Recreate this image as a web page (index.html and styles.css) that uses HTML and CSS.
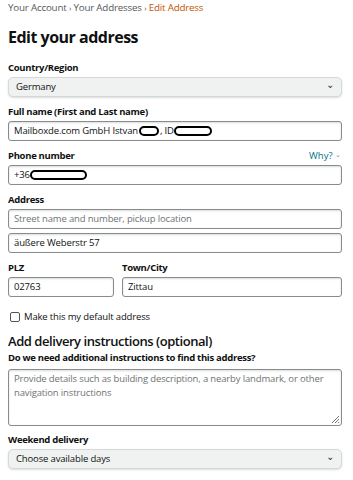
FILE: index.html
```html
<!DOCTYPE html>
<html lang="en">
<head>
  <meta charset="UTF-8">
  <meta name="viewport" content="width=device-width, initial-scale=1.0">
  <title>Edit your address</title>
  <link rel="stylesheet" href="styles.css">
</head>
<body>

<div class="container">
  <div class="breadcrumb">
    <a href="#">Your Account</a> <span class="sep">›</span>
    <a href="#">Your Addresses</a> <span class="sep">›</span>
    <span class="current">Edit Address</span>
  </div>

  <h1>Edit your address</h1>

  <div class="field">
    <label>Country/Region</label>
    <div class="dropdown">Germany <span class="chev">&#8964;</span></div>
  </div>

  <div class="field">
    <label>Full name (First and Last name)</label>
    <div class="input">Mailboxde.com GmbH Istvan <span class="redact short"></span>, ID <span class="redact mid"></span></div>
  </div>

  <div class="field">
    <div class="label-row">
      <label>Phone number</label>
      <a href="#" class="why">Why? <span class="small-chev">&#8964;</span></a>
    </div>
    <div class="input">+36<span class="redact long"></span></div>
  </div>

  <div class="field">
    <label>Address</label>
    <div class="input placeholder">Street name and number, pickup location</div>
    <div class="input second">äußere Weberstr 57</div>
  </div>

  <div class="field row">
    <div class="col plz">
      <label>PLZ</label>
      <div class="input">02763</div>
    </div>
    <div class="col city">
      <label>Town/City</label>
      <div class="input">Zittau</div>
    </div>
  </div>

  <div class="check">
    <span class="box"></span> Make this my default address
  </div>

  <h2>Add delivery instructions (optional)</h2>

  <div class="field tight">
    <label>Do we need additional instructions to find this address?</label>
    <div class="textarea placeholder">Provide details such as building description, a nearby landmark, or other navigation instructions
      <svg class="grip" width="9" height="9" viewBox="0 0 9 9"><path d="M8 1L1 8M8 4L4 8M8 7L7 8" stroke="#777" stroke-width="1"/></svg>
    </div>
  </div>

  <div class="field">
    <label>Weekend delivery</label>
    <div class="dropdown">Choose available days <span class="chev">&#8964;</span></div>
  </div>
</div>

</body>
</html>
```

FILE: styles.css
```css
body {
  font-family: "Open Sans", "Noto Sans", Arial, sans-serif;
  margin: 0;
  padding: 0;
  background-color: #fff;
  color: #0f1111;
}

.container {
  width: 334px;
  margin-left: 8px;
  padding-top: 1px;
}

.breadcrumb {
  font-size: 9.8px;
  letter-spacing: -0.2px;
  color: #565959;
  line-height: 14px;
}

.breadcrumb a {
  color: #565959;
  text-decoration: none;
}

.breadcrumb .sep {
  font-size: 8px;
}

.breadcrumb .current {
  color: #c45500;
}

h1 {
  font-size: 16px;
  font-weight: 700;
  letter-spacing: -0.5px;
  margin: 11px 0 13px;
  line-height: 22px;
}

h2 {
  font-size: 13px;
  font-weight: 600;
  letter-spacing: -0.45px;
  margin: 8px 0 1px;
  line-height: 18px;
}

.field {
  margin-bottom: 8px;
}

.field label {
  display: block;
  font-size: 9.5px;
  font-weight: 700;
  letter-spacing: -0.3px;
  line-height: 14px;
  margin-bottom: 2px;
}

.label-row {
  display: flex;
  justify-content: space-between;
  align-items: flex-start;
}

.why {
  font-size: 9.5px;
  color: #007185;
  text-decoration: none;
  line-height: 14px;
  margin-right: 1px;
}

.small-chev {
  font-size: 7px;
  color: #888;
  position: relative;
  top: -2px;
}

.input {
  height: 20px;
  box-sizing: border-box;
  border: 1px solid #888c8c;
  border-radius: 3px;
  box-shadow: inset 0 1px 2px rgba(15, 17, 17, 0.15);
  font-size: 9.5px;
  letter-spacing: -0.15px;
  line-height: 18px;
  padding: 0 5px;
  display: flex;
  align-items: center;
  white-space: nowrap;
}

.input.second {
  margin-top: 4px;
}

.placeholder {
  color: #6f7373;
}

.dropdown {
  height: 20px;
  box-sizing: border-box;
  background-color: #f0f2f2;
  border: 1px solid #d5d9d9;
  border-radius: 5px;
  box-shadow: 0 1px 2px rgba(15, 17, 17, 0.15);
  font-size: 9.5px;
  letter-spacing: -0.15px;
  line-height: 18px;
  padding: 0 7px;
  display: flex;
  justify-content: space-between;
  align-items: center;
}

.chev {
  font-size: 10px;
  color: #333;
  position: relative;
  top: -3px;
}

.row {
  display: flex;
  gap: 8px;
  margin-bottom: 13px;
}

.plz {
  width: 106px;
}

.city {
  flex: 1;
}

.redact {
  display: inline-block;
  height: 6px;
  border: 2.5px solid #000;
  border-radius: 5px;
  background-color: #fff;
}

.redact.short {
  width: 16px;
  margin: 0 1px 0 1px;
}

.redact.mid {
  width: 34px;
}

.redact.long {
  width: 53px;
}

.check {
  display: flex;
  align-items: center;
  font-size: 9.5px;
  letter-spacing: -0.15px;
  line-height: 14px;
  margin-left: 2px;
}

.check .box {
  width: 8px;
  height: 8px;
  border: 1px solid #555;
  border-radius: 2px;
  margin-right: 4px;
}

.field.tight label {
  margin-bottom: 4px;
}

.field.tight {
  margin-bottom: 7px;
}

.textarea {
  position: relative;
  height: 57px;
  box-sizing: border-box;
  border: 1px solid #888c8c;
  border-radius: 3px;
  box-shadow: inset 0 1px 2px rgba(15, 17, 17, 0.15);
  font-size: 9.5px;
  letter-spacing: -0.15px;
  line-height: 14px;
  padding: 2px 5px;
}

.grip {
  position: absolute;
  right: 1px;
  bottom: 1px;
}
```
